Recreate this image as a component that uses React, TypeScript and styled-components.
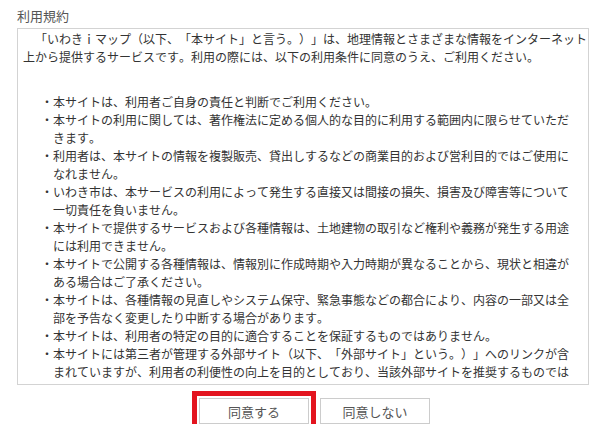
import React from "react";
import styled, { createGlobalStyle } from "styled-components";

const GlobalStyle = createGlobalStyle`
  html, body {
    margin: 0;
    padding: 0;
    background: #ffffff;
  }
  body {
    font-family: "Noto Sans CJK JP", "Noto Sans", sans-serif;
    text-spacing-trim: space-all;
    font-kerning: none;
  }
`;

const Page = styled.div`
  display: flex;
  flex-direction: column;
  padding: 7px 0 0 17px;
  width: 594px;
  box-sizing: border-box;
`;

const Label = styled.div`
  font-size: 13px;
  line-height: 18px;
  color: #555555;
  margin-bottom: 3px;
`;

const TermsBox = styled.div`
  width: 572px;
  height: 357px;
  box-sizing: border-box;
  border: 1px solid #d3d3d3;
  padding: 1px 0 0 5px;
  overflow: hidden;
  font-size: 12px;
  line-height: 18px;
  color: #333333;
  text-spacing-trim: space-all;
`;

const Intro = styled.p`
  margin: 0;
  text-indent: 12px;
`;

const RuleList = styled.ul`
  list-style: none;
  margin: 27px 13px 0 18px;
  padding: 0;
`;

const Rule = styled.li`
  padding-left: 12px;
  text-indent: -12px;
`;

const ButtonRow = styled.div`
  display: flex;
  gap: 11px;
  margin-top: 13px;
  padding-left: 182px;
`;

const ActionButton = styled.button<{ $focused?: boolean }>`
  width: 110px;
  height: 26px;
  box-sizing: border-box;
  border: 1px solid #cccccc;
  background: #ffffff;
  color: #555555;
  font-family: "Noto Sans CJK JP", "Noto Sans", sans-serif;
  font-size: 13px;
  padding: 0;
  cursor: pointer;
  outline: ${(p) => (p.$focused ? "5px solid #e3141f" : "none")};
  outline-offset: 2px;
`;

const rules = [
  "・本サイトは、利用者ご自身の責任と判断でご利用ください。",
  "・本サイトの利用に関しては、著作権法に定める個人的な目的に利用する範囲内に限らせていただきます。",
  "・利用者は、本サイトの情報を複製販売、貸出しするなどの商業目的および営利目的ではご使用になれません。",
  "・いわき市は、本サービスの利用によって発生する直接又は間接の損失、損害及び障害等について一切責任を負いません。",
  "・本サイトで提供するサービスおよび各種情報は、土地建物の取引など権利や義務が発生する用途には利用できません。",
  "・本サイトで公開する各種情報は、情報別に作成時期や入力時期が異なることから、現状と相違がある場合はご了承ください。",
  "・本サイトは、各種情報の見直しやシステム保守、緊急事態などの都合により、内容の一部又は全部を予告なく変更したり中断する場合があります。",
  "・本サイトは、利用者の特定の目的に適合することを保証するものではありません。",
  "・本サイトには第三者が管理する外部サイト（以下、「外部サイト」という。）」へのリンクが含まれていますが、利用者の利便性の向上を目的としており、当該外部サイトを推奨するものではありません。",
];

export default function App() {
  return (
    <>
      <GlobalStyle />
      <Page>
        <Label>利用規約</Label>
        <TermsBox>
          <Intro>
            「いわきｉマップ（以下、「本サイト」と言う。）」は、地理情報とさまざまな情報をインターネット上から提供するサービスです。利用の際には、以下の利用条件に同意のうえ、ご利用ください。
          </Intro>
          <RuleList>
            {rules.map((r) => (
              <Rule key={r}>{r}</Rule>
            ))}
          </RuleList>
        </TermsBox>
        <ButtonRow>
          <ActionButton $focused>同意する</ActionButton>
          <ActionButton>同意しない</ActionButton>
        </ButtonRow>
      </Page>
    </>
  );
}
